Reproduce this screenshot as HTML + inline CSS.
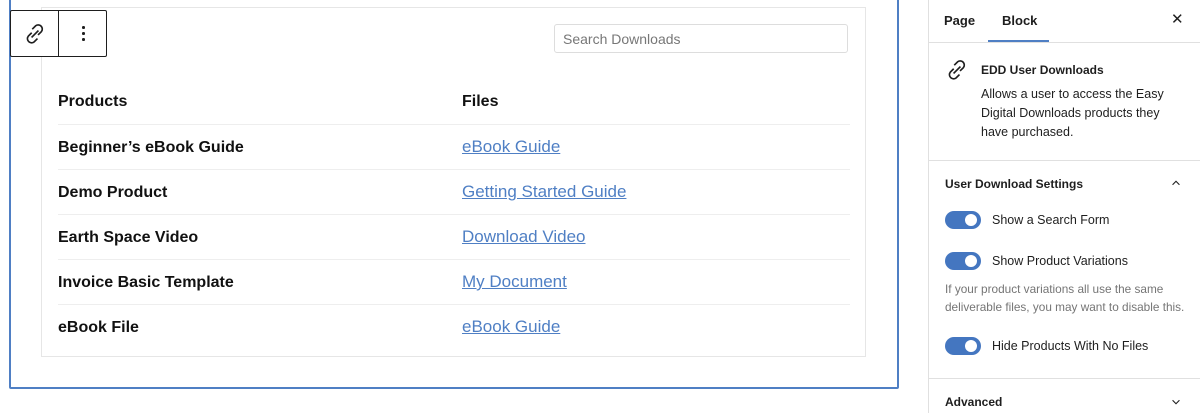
<!DOCTYPE html>
<html><head><style>
*{box-sizing:border-box;margin:0;padding:0}
body{width:1200px;height:413px;overflow:hidden;background:#fff;font-family:"Liberation Sans",sans-serif;position:relative;color:#1e1e1e}
.abs{position:absolute}
.outer{left:9px;top:-4px;width:890px;height:393px;border:2px solid #4f7fc4;border-radius:2px}
.inner{left:41px;top:7px;width:825px;height:350px;border:1px solid #e6e6e6}
.tb{left:10px;top:10px;width:97px;height:47px;border:1px solid #1e1e1e;background:#fff;border-radius:2px}
.tb .sep{position:absolute;left:47px;top:0;bottom:0;border-left:1px solid #1e1e1e}
.search{left:554px;top:24px;width:294px;height:29px;border:1px solid #ddd;border-radius:3px;font-size:14px;color:#777;padding:6px 8px}
.row{left:58px;width:792px;height:45px;border-top:1px solid #eee}
.c1,.c2{position:absolute;top:12px;font-size:17px}
.c1{left:0;font-weight:bold;color:#111;font-size:16px;top:14px}
.c2{left:404px;color:#4f7fc4;text-decoration:underline}
.side{left:928px;top:0;width:272px;height:413px;border-left:1px solid #e0e0e0;font-size:13px}
.hr{position:absolute;left:0;right:0;border-top:1px solid #e0e0e0}
.tog{position:absolute;left:16px;width:36px;height:18px;border-radius:9px;background:#4476c0}
.tog:after{content:"";position:absolute;right:4px;top:3px;width:12px;height:12px;border-radius:50%;background:#fff}
.tl{position:absolute;left:63px;font-size:12.5px;color:#1e1e1e}
</style></head><body>
<div class="abs outer"></div>
<div class="abs inner"></div>
<div class="abs tb">
<svg style="position:absolute;left:13px;top:12px" width="22" height="22" viewBox="4 4 16 16" fill="none" stroke="#1e1e1e" stroke-width="1.2"><path d="M10 8.5l2.5-2.5a3 3 0 014.2 4.2L14.2 12.7"/><path d="M13.8 15.3l-2.5 2.5a3 3 0 01-4.2-4.2L9.6 11.1"/><path d="M9.5 14.5l5-5"/></svg>
<div class="sep"></div>
<div style="position:absolute;left:71px;top:15px;width:3px">
<div style="width:2.5px;height:2.5px;background:#1e1e1e;border-radius:50%;margin-bottom:3.5px"></div>
<div style="width:2.5px;height:2.5px;background:#1e1e1e;border-radius:50%;margin-bottom:3.5px"></div>
<div style="width:2.5px;height:2.5px;background:#1e1e1e;border-radius:50%"></div></div>
</div>
<div class="abs search">Search Downloads</div>
<div class="abs row" style="top:79px;border-top:none"><span class="c1">Products</span><span class="c1" style="left:404px">Files</span></div>
<div class="abs row" style="top:124px"><span class="c1">Beginner’s eBook Guide</span><span class="c2">eBook Guide</span></div>
<div class="abs row" style="top:169px"><span class="c1">Demo Product</span><span class="c2">Getting Started Guide</span></div>
<div class="abs row" style="top:214px"><span class="c1">Earth Space Video</span><span class="c2">Download Video</span></div>
<div class="abs row" style="top:259px"><span class="c1">Invoice Basic Template</span><span class="c2">My Document</span></div>
<div class="abs row" style="top:304px"><span class="c1">eBook File</span><span class="c2">eBook Guide</span></div>

<div class="abs side">
<div style="position:absolute;left:15px;top:13px;font-weight:bold;font-size:13px">Page</div>
<div style="position:absolute;left:73px;top:13px;font-weight:bold;font-size:13px">Block</div>
<div style="position:absolute;left:242px;top:10px;font-size:15px">✕</div>
<div class="hr" style="top:42px"></div>
<div style="position:absolute;left:59px;top:40px;width:61px;height:2px;background:#4f7fc4"></div>
<svg style="position:absolute;left:17px;top:59px" width="22" height="22" viewBox="4 4 16 16" fill="none" stroke="#1e1e1e" stroke-width="1.2"><path d="M10 8.5l2.5-2.5a3 3 0 014.2 4.2L14.2 12.7"/><path d="M13.8 15.3l-2.5 2.5a3 3 0 01-4.2-4.2L9.6 11.1"/><path d="M9.5 14.5l5-5"/></svg>
<div style="position:absolute;left:52px;top:63px;font-weight:bold;font-size:12px">EDD User Downloads</div>
<div style="position:absolute;left:52px;top:85px;width:200px;font-size:12.5px;line-height:19px">Allows a user to access the Easy Digital Downloads products they have purchased.</div>
<div class="hr" style="top:160px"></div>
<div style="position:absolute;left:16px;top:177px;font-weight:bold;font-size:12px">User Download Settings</div>
<svg style="position:absolute;left:241px;top:177px" width="12" height="12" viewBox="0 0 14 14" fill="none" stroke="#1e1e1e" stroke-width="1.3"><path d="M3 9l4-4 4 4"/></svg>
<div class="tog" style="top:211px"></div><div class="tl" style="top:213px">Show a Search Form</div>
<div class="tog" style="top:252px"></div><div class="tl" style="top:254px">Show Product Variations</div>
<div style="position:absolute;left:16px;top:280px;font-size:11.8px;color:#757575;line-height:18px;width:260px">If your product variations all use the same deliverable files, you may want to disable this.</div>
<div class="tog" style="top:337px"></div><div class="tl" style="top:339px">Hide Products With No Files</div>
<div class="hr" style="top:378px"></div>
<div style="position:absolute;left:16px;top:395px;font-weight:bold;font-size:12px">Advanced</div>
<svg style="position:absolute;left:241px;top:396px" width="12" height="12" viewBox="0 0 14 14" fill="none" stroke="#1e1e1e" stroke-width="1.3"><path d="M3 5l4 4 4-4"/></svg>
</div>
</body></html>
